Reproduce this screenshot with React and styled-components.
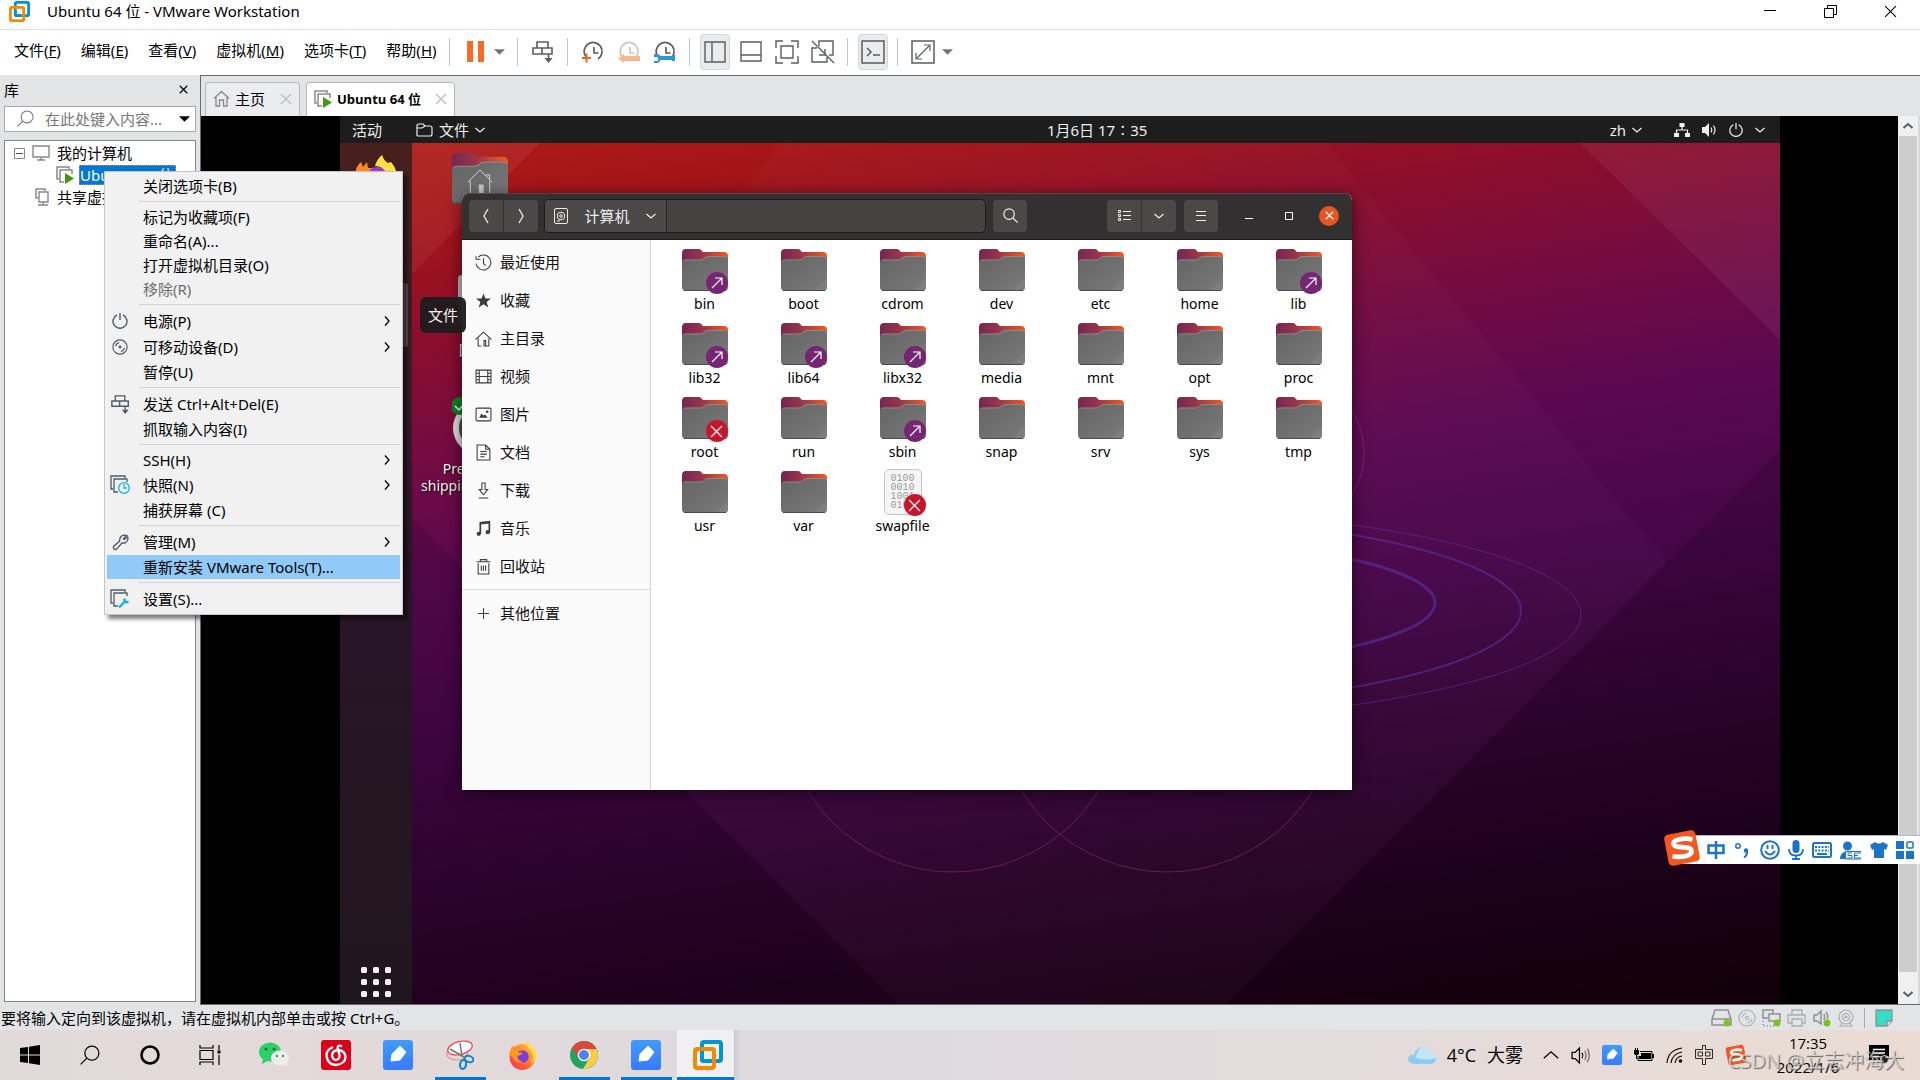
import React from "react";
import styled, { createGlobalStyle, css } from "styled-components";

const GlobalStyle = createGlobalStyle`
  * {
    box-sizing: border-box;
  }

  body {
    margin: 0;
    font-family: "Noto Sans", "Noto Sans CJK SC", sans-serif;
    font-size: 15px;
    line-height: 20px;
    color: #000;
    overflow: hidden;
  }

  button,
  input {
    font: inherit;
    color: inherit;
    border: 0;
    padding: 0;
    background: none;
  }
`;

const Screen = styled.div`
  display: flex;
  flex-direction: column;
  height: 100vh;
  position: relative;
  background: #e3e4e6;
`;

const Glyph = styled.svg`
  display: block;
  flex: none;
  fill: none;
  stroke: ${(p) => (p.$flat ? "none" : "currentColor")};
  stroke-width: ${(p) => p.$stroke || 2};
`;

/* ---------- VMware title bar and toolbar ---------- */

const TitleBar = styled.header`
  display: flex;
  align-items: center;
  height: 30px;
  padding: 0 0 7px 9px;
  background: #fff;
  border-bottom: 1px solid #e0e1e2;
`;

const TitleText = styled.h1`
  flex: 1;
  margin: 0 0 0 17px;
  font-size: 15px;
  font-weight: 400;
`;

const CaptionButton = styled.button`
  display: flex;
  align-items: center;
  justify-content: center;
  width: 60px;
  height: 24px;
`;

const Toolbar = styled.div`
  display: flex;
  align-items: center;
  gap: 6px;
  height: 45px;
  padding-bottom: 2px;
  padding-left: 4px;
  background: #fff;
  color: #5b5d60;
`;

const MenuNav = styled.nav`
  display: flex;
  width: 436px;
  color: #000;
`;

const MenuButton = styled.button`
  padding: 0 10px 3px;
  white-space: nowrap;
`;

const ToolGroup = styled.div`
  display: flex;
`;

const Tool = styled.button`
  display: flex;
  align-items: center;
  justify-content: center;
  width: ${(p) => (p.$narrow ? 18 : 30)}px;
  height: 36px;
  border-radius: 4px;
  ${(p) =>
    p.$active &&
    css`
      background: #e9ebec;
      border: 1px solid #d4d6d8;
    `}
`;

const ToolDivider = styled.span`
  width: 1px;
  height: 28px;
  margin: 0 4px 0 3px;
  background: #c4c5c7;
`;

/* ---------- Library panel ---------- */

const Workspace = styled.div`
  display: flex;
  flex: 1;
  min-height: 0;
`;

const Library = styled.aside`
  display: flex;
  flex-direction: column;
  width: 200px;
  padding: 0 4px 3px;
`;

const LibraryHead = styled.div`
  display: flex;
  align-items: center;
  justify-content: space-between;
  height: 31px;
  padding: 0 8px 2px 0;
`;

const SearchBox = styled.label`
  display: flex;
  align-items: center;
  height: 26px;
  padding: 0 5px 1px 12px;
  background: #fff;
  border: 1px solid #a7a9ac;
  color: #777;

  input {
    flex: 1;
    min-width: 0;
    margin-left: 11px;
    outline: 0;
  }

  input::placeholder {
    color: #777;
    opacity: 1;
  }
`;

const Tree = styled.ul`
  flex: 1;
  margin: 8px 0 0;
  padding: 1px 0 0;
  list-style: none;
  background: #fff;
  border: 1px solid #82868f;
  overflow: hidden;
`;

const TreeRow = styled.li`
  display: flex;
  align-items: center;
  gap: 5px;
  height: 22px;
  padding-left: ${(p) => p.$indent}px;
  color: #888;
  white-space: nowrap;

  span {
    color: #000;
  }
`;

const TreeSelected = styled.strong`
  padding: 0 3px 0 1px;
  font-weight: 400;
  color: #fff;
  background: #0078d7;
  outline: 1px dotted #e8892a;
  outline-offset: -1px;
`;

/* ---------- Tabs and console ---------- */

const Console = styled.main`
  display: flex;
  flex-direction: column;
  flex: 1;
  min-width: 0;
  border-top: 1px solid #696a6d;
  border-left: 1px solid #696a6d;
  border-bottom: 1px solid #696a6d;
`;

const Tabs = styled.div`
  display: flex;
  align-items: flex-end;
  gap: 6px;
  height: 40px;
  padding-left: 4px;
`;

const Tab = styled.div`
  display: flex;
  align-items: center;
  width: ${(p) => (p.$active ? 149 : 95)}px;
  height: 34px;
  padding: 0 7px 2px;
  border: 1px solid #b9babc;
  border-bottom: 0;
  border-radius: 4px 4px 0 0;
  background: ${(p) => (p.$active ? "#fff" : "#ebecee")};
  color: #8a8a8a;

  span {
    flex: 1;
    padding-left: 5px;
    color: #000;
    font-family: "Open Sans", "Noto Sans CJK SC", sans-serif;
    font-size: ${(p) => (p.$active ? 13 : 15)}px;
    font-weight: ${(p) => (p.$active ? 700 : 400)};
    white-space: nowrap;
  }

  button {
    color: #c3c3c3;
  }
`;

const Viewport = styled.div`
  display: flex;
  flex: 1;
  min-height: 0;
  background: #000;
`;

const Guest = styled.div`
  display: flex;
  flex-direction: column;
  flex: 1;
  margin: 0 118px 0 139px;
  color: #f2f2f2;
`;

const ScrollBar = styled.div`
  display: flex;
  flex-direction: column;
  width: 22px;
  background: #f0f0f0;
  border-right: 2px solid #d8d9db;
  color: #606060;
`;

const ScrollThumb = styled.div`
  flex: 1;
  margin: 0 1px 12px;
  background: #cdcdcd;
`;

const ScrollArrow = styled.button`
  display: flex;
  justify-content: center;
  align-items: center;
  height: 20px;
`;

/* ---------- Ubuntu desktop ---------- */

/* the clock sits right of the centre, as the side columns differ */
const TopBar = styled.div`
  display: grid;
  grid-template-columns: 9fr auto 8fr;
  align-items: center;
  height: 27px;
  padding: 0 15px 0 12px;
  background: #1d1d1d;
  color: #eee;
`;

const TopBarSide = styled.div`
  display: flex;
  align-items: center;
  gap: ${(p) => p.$gap}px;
  justify-content: ${(p) => (p.$end ? "flex-end" : "flex-start")};
`;

const TopBarButton = styled.button`
  display: flex;
  align-items: center;
  gap: 6px;
  margin-right: ${(p) => p.$after || 0}px;
`;

const Desktop = styled.div`
  position: relative;
  display: flex;
  flex: 1;
  min-height: 0;
  overflow: hidden;
  background: linear-gradient(
    171deg,
    #b01c16 0%,
    #a31419 9%,
    #8c0e2c 19%,
    #740b42 30%,
    #5a0852 42%,
    #460648 56%,
    #320433 70%,
    #22021f 84%,
    #13000a 100%
  );
`;

const Wallpaper = styled.svg`
  position: absolute;
  inset: 0;
  width: 100%;
  height: 100%;
`;

const Dock = styled.div`
  position: relative;
  display: flex;
  flex-direction: column;
  justify-content: space-between;
  align-items: center;
  width: 72px;
  padding: 11px 0 7px;
  background: linear-gradient(#47201d 0%, #3c1a28 30%, #2a1529 50%, #20161f 100%);
`;

const DockRunning = styled.span`
  position: absolute;
  top: 140px;
  left: 8px;
  width: 60px;
  height: 64px;
  border-radius: 3px;
  background: rgba(255, 255, 255, 0.22);
`;

const DesktopIcon = styled.div`
  position: absolute;
  left: 75px;
  top: ${(p) => p.$y}px;
  display: flex;
  flex-direction: column;
  align-items: center;
  width: 130px;
  gap: ${(p) => p.$gap || 4}px;
  font-size: 14px;
  line-height: 17px;
  text-align: center;
  text-shadow: 1px 1px 1px #000;
`;

const DockTooltip = styled.span`
  position: absolute;
  left: 80px;
  top: 154px;
  padding: 8px;
  border-radius: 6px;
  background: rgba(30, 28, 28, 0.95);
  line-height: 20px;
`;

/* ---------- Files window ---------- */

const FilesFrame = styled.section`
  position: absolute;
  left: 122px;
  top: 50px;
  display: flex;
  width: 890px;
  height: 597px;
  border-radius: 8px 8px 0 0;
  box-shadow: 0 3px 16px rgba(0, 0, 0, 0.6);
`;

const FilesWindow = styled.div`
  display: flex;
  flex-direction: column;
  flex: 1;
  border-radius: 8px 8px 0 0;
  overflow: hidden;
  background: #fff;
  color: #000;
`;

const HeaderBar = styled.div`
  display: flex;
  align-items: center;
  height: 47px;
  padding: 0 13px 2px 7px;
  background: #323030;
  border-top: 1px solid #4a4848;
  border-bottom: 1px solid #1c1b1b;
  color: #eee;
`;

const ButtonPair = styled.div`
  display: flex;
  gap: 1px;
  margin-right: ${(p) => p.$after}px;
  border-radius: 4px;
  overflow: hidden;
`;

const HeaderButton = styled.button`
  display: flex;
  align-items: center;
  justify-content: center;
  width: 34px;
  height: 32px;
  background: #4a4947;
`;

const PathBar = styled.div`
  display: flex;
  flex: 1;
  height: 34px;
  margin-right: 7px;
  border: 1px solid #1d1c1c;
  border-radius: 5px;
  background: #444340;
  overflow: hidden;
`;

const PathSegment = styled.button`
  display: flex;
  align-items: center;
  justify-content: space-between;
  width: 122px;
  padding: 0 10px 0 9px;
  background: #4a4947;
  border-right: 1px solid #242323;
`;

const WindowControls = styled.div`
  display: flex;
  align-items: center;
  gap: 20px;
`;

const WindowControl = styled.button`
  display: flex;
  align-items: center;
  justify-content: center;
  width: 20px;
  height: 20px;
  border-radius: 50%;
  color: #fff;
  background: ${(p) => (p.$close ? "#e95420" : "transparent")};
`;

const FilesBody = styled.div`
  display: flex;
  flex: 1;
`;

const Places = styled.nav`
  width: 189px;
  padding-top: 3px;
  background: #fafafa;
  border-right: 1px solid #d6d6d6;
`;

const Place = styled.a`
  display: flex;
  align-items: center;
  gap: 8px;
  height: 38px;
  padding-left: 13px;
  color: #111;
  text-decoration: none;

  svg {
    color: #3d3d3d;
  }
`;

const PlacesDivider = styled.hr`
  margin: 4px 0;
  border: 0;
  border-top: 1px solid #dcdcdc;
`;

const FileGrid = styled.div`
  display: grid;
  flex: 1;
  grid-template-columns: repeat(7, 1fr);
  grid-auto-rows: 74px;
  align-content: start;
  padding: 9px 4px 0;
`;

const FileCell = styled.figure`
  display: flex;
  flex-direction: column;
  align-items: center;
  gap: 3px;
  margin: 0;

  figcaption {
    font-size: 14px;
    line-height: 18px;
  }
`;

const FileArt = styled.div`
  position: relative;
  width: 46px;
  height: 43px;
`;

const Emblem = styled.span`
  position: absolute;
  right: 0;
  bottom: -2px;
  display: flex;
  align-items: center;
  justify-content: center;
  width: 22px;
  height: 22px;
  border-radius: 50%;
  color: #fff;
  background: ${(p) => (p.$denied ? "#c7162b" : "#762572")};
`;

const BinarySheet = styled.div`
  width: 38px;
  height: 46px;
  margin: -2px auto 0;
  padding-top: 4px;
  border: 1px solid #c4c4c4;
  border-radius: 5px;
  background: #f5f5f5;
  color: #999;
  font-family: "Liberation Mono", monospace;
  font-size: 10px;
  line-height: 9px;
  text-align: center;
`;

/* ---------- Context menu ---------- */

const ContextMenu = styled.div`
  position: absolute;
  left: 104px;
  top: 171px;
  width: 299px;
  padding: 2px;
  border: 1px solid #c6c6c6;
  background: #f1f1f1;
  box-shadow: 4px 4px 4px rgba(0, 0, 0, 0.5);
`;

const ContextItem = styled.button`
  display: grid;
  grid-template-columns: 36px 1fr 18px;
  align-items: center;
  width: 100%;
  height: ${(p) => (p.$tall ? 26 : 24)}px;
  text-align: left;
  color: ${(p) => (p.$disabled ? "#6d6d6d" : "#000")};
  background: ${(p) => (p.$selected ? "#91c9f7" : "transparent")};
`;

const ContextIcon = styled.span`
  display: flex;
  justify-content: center;
  width: 26px;
  color: #4d5c68;
`;

const ContextDivider = styled.hr`
  height: 7px;
  margin: 0 0 0 32px;
  border: 0;
  background: linear-gradient(#d2d2d2, #d2d2d2) 0 3px / 100% 1px no-repeat;
`;

/* ---------- Status bar and taskbar ---------- */

const StatusBar = styled.footer`
  display: flex;
  align-items: center;
  height: 25px;
  padding: 0 27px 0 1px;
  color: #8e9092;
`;

const StatusText = styled.span`
  flex: 1;
  color: #000;
`;

const StatusIcons = styled.div`
  display: flex;
  align-items: center;
  gap: 5px;
`;

const StatusDivider = styled.span`
  width: 1px;
  height: 20px;
  margin: 0 5px 0 3px;
  background: #a8a8a8;
`;

const Taskbar = styled.div`
  display: flex;
  align-items: center;
  height: 50px;
  padding-right: 31px;
  background: linear-gradient(90deg, #e2dad8 0%, #e3d9d9 20%, #dedae0 45%, #e4dbdb 70%, #eadcd3 100%);
`;

const TaskGroup = styled.div`
  display: flex;
  margin-right: 3px;
`;

const TaskButton = styled.button`
  display: flex;
  align-items: center;
  justify-content: center;
  width: ${(p) => (p.$system ? 60 : 62)}px;
  height: 50px;
  background-repeat: no-repeat;
  background-position: center bottom;
  ${(p) =>
    p.$running &&
    css`
      background-image: linear-gradient(#0078d7, #0078d7);
      background-size: 51px 3px;
    `}
  ${(p) =>
    p.$active &&
    css`
      background-color: #f2eff2;
      background-image: linear-gradient(#0078d7, #0078d7);
      background-size: 100% 3px;
      box-shadow: inset -4px 0 rgba(225, 222, 230, 0.6), inset -5px 0 #c4c2c8;
    `}
`;

const Tray = styled.div`
  display: flex;
  align-items: center;
  gap: 12px;
  margin-left: auto;
`;

const Weather = styled.div`
  display: flex;
  align-items: center;
  gap: 11px;
  margin-right: 8px;
  font-family: "Open Sans", "Noto Sans CJK SC", sans-serif;
  font-size: 18px;
`;

const Clock = styled.time`
  width: 98px;
  text-align: center;
  font-family: "Open Sans", sans-serif;
  line-height: 24px;
`;

const Watermark = styled.span`
  position: absolute;
  right: 16px;
  bottom: 6px;
  color: rgba(225, 225, 225, 0.75);
  font-family: "Open Sans", "Noto Sans CJK SC", sans-serif;
  font-size: 20px;
  line-height: 26px;
  text-shadow: 1px 1px 1px rgba(70, 70, 70, 0.8);
`;

const ImeBar = styled.div`
  position: absolute;
  right: 0;
  top: 835px;
  display: flex;
  align-items: center;
  justify-content: space-between;
  width: 245px;
  height: 29px;
  padding: 0 6px 0 32px;
  background: #fff;
  border-top: 1px solid #b8b6c4;
  color: #1c74c8;
`;

const ImeLogo = styled.span`
  position: absolute;
  left: -12px;
  top: -7px;
`;

/* ---------- Drawings ---------- */

const VmwareLogo = ({ size }) => (
  <Glyph width={size} height={size} viewBox="0 0 30 30" $stroke={4}>
    <rect x="9" y="2" width="19" height="19" rx="2" stroke="#0095d5" />
    <rect x="2" y="9" width="19" height="19" rx="2" stroke="#f38b00" />
    <path d="M9 13V19Q9 21 11 21H17" stroke="#0095d5" />
  </Glyph>
);

const Chevron = ({ width = 10, dir = "down", stroke = 1.3 }) => {
  const turn = { down: 0, up: 180, left: 90, right: -90 }[dir];
  return (
    <Glyph width={width} height={width} viewBox="0 0 10 10" $stroke={stroke}>
      <path d="M0.5 3 5 7 9.5 3" transform={`rotate(${turn} 5 5)`} />
    </Glyph>
  );
};

const Cross = ({ size = 12, stroke = 1.5 }) => (
  <Glyph width={size} height={size} viewBox="0 0 12 12" $stroke={stroke}>
    <path d="M1 1 11 11M11 1 1 11" />
  </Glyph>
);

const Triangle = ({ color = "#757575" }) => (
  <Glyph width="11" height="6" viewBox="0 0 12 6" $flat>
    <path d="M0 0H12L6 6Z" fill={color} />
  </Glyph>
);

const Magnifier = ({ size = 16, flip, stroke = 1.3 }) => (
  <Glyph width={size} height={size} viewBox="0 0 16 16" $stroke={stroke}>
    <g transform={flip ? "translate(16 0) scale(-1 1)" : undefined}>
      <circle cx="6.5" cy="6.5" r="5.6" />
      <path d="M10.5 10.5 15.5 15.5" />
    </g>
  </Glyph>
);

const SendKeys = ({ size = 22, stroke = 1.6 }) => (
  <Glyph width={size} height={size} viewBox="0 0 22 22" $stroke={stroke}>
    <path d="M5 1H16V7H5ZM1 7H10V13H1ZM10 7H20V13H10ZM16.5 13V19" />
    <path d="M12.5 17H20.5L16.5 22Z" fill="currentColor" stroke="none" />
  </Glyph>
);

const SnapshotClock = ({ children, faded }) => (
  <Glyph width="22" height="22" viewBox="0 0 22 22">
    <g opacity={faded ? 0.35 : 1}>
      <path d="M4 16A9 9 0 1 1 16 18M12 6V12H16.5" strokeWidth="1.7" />
    </g>
    {children}
  </Glyph>
);

const WrenchMark = () => (
  <path d="M0 13H4L7 15H18V14H21V20H18V19H7L4 22H0V20H4V16H0Z" fill="#2896dc" stroke="none" />
);

const GuestMark = ({ size = 18 }) => (
  <Glyph width={size} height={size} viewBox="0 0 18 18" $stroke={1.5}>
    <path d="M3 13H1V1H13V3M8 16H4V4H16V8" />
    <path d="M9 7 18 12.5 9 18Z" fill="#3f9a0c" stroke="none" />
  </Glyph>
);

const HomeMark = ({ size = 17 }) => (
  <Glyph width={size} height={size} viewBox="0 0 17 17" $stroke={1.3}>
    <path d="M1 8.5 8.5 1.5 16 8.5M3 7V16H6.5V10H10.5V16H14V7" />
  </Glyph>
);

const PowerMark = ({ size = 16 }) => (
  <Glyph width={size} height={size} viewBox="0 0 16 16" $stroke={1.4}>
    <path d="M5 2A7 7 0 1 0 11 2M8 0V7" />
  </Glyph>
);

const DiscMark = ({ size = 18 }) => (
  <Glyph width={size} height={size} viewBox="0 0 18 18" $stroke={1.3}>
    <circle cx="9" cy="9" r="8" />
    <circle cx="9" cy="9" r="1" fill="currentColor" />
    <path d="M4 8Q5 4.5 8 4M14 10Q13 13.5 10 14" />
  </Glyph>
);

const Wrench = () => (
  <Glyph width="17" height="17" viewBox="0 0 18 18" $stroke={1.4}>
    <path d="M15.5 1.5 12 5 13 6 16.5 3Q18 7 14 9.5H10.5L5 16Q2.5 17.5 1.5 14.5Q1 13 3 12L8 7.5Q8 2 12.5 1.2Z" />
  </Glyph>
);

const CopyMark = ({ accent }) => (
  <Glyph width="20" height="20" viewBox="0 0 20 20" $stroke={1.3}>
    <path d="M3 14H1V1H15V3M8 17H4V4H17V7" />
    {accent === "clock" ? (
      <g stroke="#12b4d8">
        <circle cx="14" cy="13" r="5.3" fill="#f1f1f1" />
        <path d="M14 9V13H17" />
      </g>
    ) : (
      <path d="M9 18.5 15 12.5M14.5 9.5V13H18.5" stroke="#12b4d8" strokeWidth="2.4" />
    )}
  </Glyph>
);

const Folder = ({ width = 46, height = 42, home }) => (
  <Glyph width={width} height={height} viewBox="0 0 46 42" $flat>
    <path d="M0 14V4Q0 0 4 0H17Q19 0 20 2L21 3H42Q46 3 46 7V16Z" fill="url(#folderBack)" />
    <path
      d="M0 15Q0 10.5 4 10.5H18Q21 10.5 22 9Q24 7 26 7H42Q46 7 46 11V38Q46 42 42 42H4Q0 42 0 38Z"
      fill="url(#folderFront)"
    />
    <path
      d="M1 12Q2 11 4 11H18Q21 11 22 9.5Q24 7.5 26 7.5H42Q44.5 7.5 45.5 9"
      stroke="#969696"
      strokeWidth="0.7"
    />
    <path d="M46 29V38Q46 42 42 42H33Z" fill="#838383" opacity=".6" />
    <path d="M2 41.5H44" stroke="#4c4c4c" strokeWidth="1" />
    {home && (
      <g>
        <path
          d="M13 24 23 14 33 24M15 23V38M31 23V38M28 18H31V22"
          stroke="#d6d6d6"
          strokeWidth="0.8"
        />
        <rect x="22" y="26" width="4" height="10" fill="#ccc" />
      </g>
    )}
  </Glyph>
);

const SogouMark = ({ size }) => (
  <Glyph width={size} height={size} viewBox="0 0 36 36" $flat>
    <rect x="3" y="3" width="30" height="30" rx="4" fill="#f4571f" transform="rotate(-11 18 18)" />
    <path
      d="M28 10C20 8 9 10 10 14.5C11 19 26 15 27 20.5C28 26 16 27 9 26"
      stroke="#fff"
      strokeWidth="4.5"
    />
  </Glyph>
);

const PenApp = ({ size }) => (
  <Glyph width={size} height={size} viewBox="0 0 30 30" $flat>
    <rect width="30" height="30" rx="3" fill="url(#penBlue)" />
    <path
      d="M8 21 9 14 17 6 23 12 17 20Z"
      fill="#fff"
      stroke="#fff"
      strokeWidth="1"
      strokeLinejoin="round"
    />
  </Glyph>
);

const FirefoxLogo = ({ size }) => (
  <Glyph width={size} height={size} viewBox="0 0 28 28" $flat>
    <circle cx="14" cy="15.5" r="12.5" fill="url(#foxFire)" />
    <path d="M18 0Q17 5 21 8Q27 14 22 22Q30 16 26 8L24 6Q23 8 22 6Q21 2 18 0Z" fill="#ffdf3a" />
    <circle cx="14" cy="15" r="6" fill="#7a3fd8" />
    <path
      d="M1 13Q2 7 5 4L6 8Q9 6 12 7L9 11H14Q13 14 9 14Q9 20 15 20Q10 22 6 18Q4 14 1 13Z"
      fill="#ff9a1f"
    />
  </Glyph>
);

/* only the top of this one shows over the context menu */
const DockFirefox = () => (
  <Glyph width="46" height="46" viewBox="0 0 46 46" $flat>
    <path d="M2 20Q3 12 8 8L10 13L14 8L15 14H34L28 40H12Z" fill="#ff8a1f" />
    <path d="M22 12Q24 5 29 1Q31 7 35 9L38 8Q45 16 44 26Q42 40 32 43L34 20Q30 12 22 12Z" fill="#ffe040" />
    <path d="M16 18Q18 13 24 13Q31 13 32 18L28 30Z" fill="#9a3be0" />
  </Glyph>
);

const ChromeLogo = () => (
  <Glyph width="28" height="28" viewBox="0 0 28 28" $flat>
    <circle cx="14" cy="14" r="14" fill="#21a45c" />
    <path d="M14 8H26.5A14 14 0 0 1 13 28L19.5 17Z" fill="#ffcd41" />
    <path d="M2 7A14 14 0 0 1 26.5 8H14L8 17Z" fill="#d8493c" />
    <circle cx="14" cy="14" r="6.3" fill="#fff" />
    <circle cx="14" cy="14" r="5" fill="#4a86ee" />
  </Glyph>
);

const WechatLogo = () => (
  <Glyph width="30" height="26" viewBox="0 0 30 26" $flat>
    <ellipse cx="11" cy="10" rx="11" ry="9.5" fill="#2fcf6c" />
    <path d="M4 16 3 22 10 18Z" fill="#2fcf6c" />
    <circle cx="7" cy="7" r="1.5" fill="#116a35" />
    <circle cx="15" cy="7" r="1.5" fill="#116a35" />
    <ellipse cx="21" cy="16" rx="9" ry="7.5" fill="#ededed" />
    <path d="M24 21 28 25 28 19Z" fill="#ededed" />
    <circle cx="18" cy="14" r="1.2" fill="#777" />
    <circle cx="24" cy="14" r="1.2" fill="#777" />
  </Glyph>
);

const NeteaseLogo = () => (
  <Glyph width="30" height="30" viewBox="0 0 30 30" $stroke={2.3}>
    <rect width="30" height="30" rx="3" fill="#dd001b" stroke="none" />
    <path
      d="M12 7Q5 10 5.5 16Q7 25 15 25Q24 24 24.5 17Q24 11 18 10Q11 10 11 16Q12 20 15 20Q19 19 18.5 15L16.5 8Q17 4 21 6.5"
      stroke="#fff"
    />
  </Glyph>
);

const SnipLogo = () => (
  <Glyph width="28" height="30" viewBox="0 0 28 30" $stroke={1.2}>
    <ellipse cx="11" cy="14" rx="10.5" ry="6" stroke="#e89292" />
    <ellipse
      cx="14"
      cy="8"
      rx="12.5"
      ry="6.5"
      transform="rotate(-14 14 8)"
      fill="#fafafa"
      stroke="#ea3d3d"
    />
    <path d="M4 9 18 17M14 3 16 17" stroke="#777" strokeWidth="1.5" />
    <g stroke="#1384cf" strokeWidth="2">
      <ellipse cx="23" cy="19" rx="4.5" ry="3" transform="rotate(20 23 19)" />
      <ellipse cx="17" cy="24.5" rx="3" ry="4.5" transform="rotate(10 17 25)" />
    </g>
  </Glyph>
);

const SpeakerMark = ({ size = 18 }) => (
  <Glyph width={size} height={size} viewBox="0 0 18 18" $stroke={1.2}>
    <path d="M1 6H4L8 2V16L4 12H1ZM10.5 6.5Q12 9 10.5 11.5" />
    <path d="M13 4.5Q15.5 9 13 13.5M15.5 2.5Q19 9 15.5 15.5" opacity=".5" />
  </Glyph>
);

/* ---------- Data ---------- */

const menus = [
  ["文件", "F"],
  ["编辑", "E"],
  ["查看", "V"],
  ["虚拟机", "M"],
  ["选项卡", "T"],
  ["帮助", "H"],
];

const contextItems = [
  { text: "关闭选项卡(B)" },
  null,
  { text: "标记为收藏项(F)" },
  { text: "重命名(A)..." },
  { text: "打开虚拟机目录(O)" },
  { text: "移除(R)", disabled: true },
  null,
  { text: "电源(P)", icon: <PowerMark size={16} />, more: true },
  { text: "可移动设备(D)", icon: <DiscMark size={16} />, more: true },
  { text: "暂停(U)" },
  null,
  { text: "发送 Ctrl+Alt+Del(E)", icon: <SendKeys size={19} /> },
  { text: "抓取输入内容(I)" },
  null,
  { text: "SSH(H)", more: true },
  { text: "快照(N)", icon: <CopyMark accent="clock" />, more: true },
  { text: "捕获屏幕 (C)" },
  null,
  { text: "管理(M)", icon: <Wrench />, more: true },
  { text: "重新安装 VMware Tools(T)...", selected: true },
  null,
  { text: "设置(S)...", icon: <CopyMark accent="wrench" /> },
];

const places = [
  ["最近使用", <path d="M3 3A7 7 0 1 1 1 9M1 2V5H5M8 4V9L10 11" />],
  [
    "收藏",
    <path
      d="M8 1.5 9.8 6H15L11 9.3 12.5 14.5 8 11.5 3.5 14.5 5 9.3 1 6H6.2Z"
      fill="currentColor"
      stroke="none"
    />,
  ],
  ["主目录", <path d="M0.5 9 8 2 15.5 9M3 8V15H6M10 15H13V8M8.5 15V10H10V15Z" />],
  [
    "视频",
    <path d="M1 2H15V14H1ZM4 2V14M12 2V14M4 8H12M1 5H4M1 8H4M1 11H4M12 5H15M12 8H15M12 11H15" />,
  ],
  [
    "图片",
    <g>
      <rect x="1" y="2" width="14" height="12" rx="1" />
      <path d="M4 11 6 7 8 9 9.5 8 12 11Z" fill="currentColor" stroke="none" />
      <circle cx="11.5" cy="5.5" r="1.2" fill="currentColor" stroke="none" />
    </g>,
  ],
  ["文档", <path d="M2 1H10L14 5V15H2ZM10 1V5H14M5 7H11M5 9.5H11M5 12H9" />],
  ["下载", <path d="M6.5 1H9.5V7H12L8 12 4 7H6.5ZM3.5 15H12.5" />],
  [
    "音乐",
    <g>
      <path d="M5 13V2.5L13.5 1.5V11.5M5 3.5 13.5 2.5" strokeWidth="1.6" />
      <circle cx="3.5" cy="13" r="2" fill="currentColor" stroke="none" />
      <circle cx="12" cy="11.5" r="2" fill="currentColor" stroke="none" />
    </g>,
  ],
  ["回收站", <path d="M1.5 3.5H14.5M5 3V1.5H11V3M3 5V15H13V5M6 7V12M8 7V12M10 7V12" />],
];

const files = [
  ["bin", "link"],
  ["boot"],
  ["cdrom"],
  ["dev"],
  ["etc"],
  ["home"],
  ["lib", "link"],
  ["lib32", "link"],
  ["lib64", "link"],
  ["libx32", "link"],
  ["media"],
  ["mnt"],
  ["opt"],
  ["proc"],
  ["root", "denied"],
  ["run"],
  ["sbin", "link"],
  ["snap"],
  ["srv"],
  ["sys"],
  ["tmp"],
  ["usr"],
  ["var"],
  ["swapfile", "denied"],
];

/* ---------- Sections ---------- */

function VmToolbar() {
  return (
    <Toolbar>
      <MenuNav>
        {menus.map(([text, key]) => (
          <MenuButton key={key}>
            {text}(<u>{key}</u>)
          </MenuButton>
        ))}
      </MenuNav>
      <ToolDivider />
      <ToolGroup>
        <Tool aria-label="挂起">
          <Glyph width="17" height="21" viewBox="0 0 17 21" $flat>
            <path d="M0 0H6V21H0ZM11 0H17V21H11Z" fill="#fb6a22" />
          </Glyph>
        </Tool>
        <Tool $narrow aria-label="电源选项">
          <Triangle />
        </Tool>
      </ToolGroup>
      <ToolDivider />
      <Tool aria-label="发送">
        <SendKeys />
      </Tool>
      <ToolDivider />
      <Tool aria-label="拍摄快照">
        <SnapshotClock>
          <path d="M0 17H9M4.5 12.5V21.5" stroke="#ec6426" />
        </SnapshotClock>
      </Tool>
      <Tool aria-label="恢复快照">
        <SnapshotClock faded>
          <path d="M22 15V20H6V22L0 17.5 6 13V15Z" fill="#fdb48f" stroke="none" />
        </SnapshotClock>
      </Tool>
      <Tool aria-label="管理快照">
        <SnapshotClock>
          <WrenchMark />
        </SnapshotClock>
      </Tool>
      <ToolDivider />
      <Tool $active aria-label="显示库">
        <Glyph width="22" height="22" viewBox="0 0 22 22" $stroke={1.4}>
          <path d="M1 1H21V21H1ZM8 1V21" />
        </Glyph>
      </Tool>
      <Tool aria-label="缩略图栏">
        <Glyph width="22" height="22" viewBox="0 0 22 22" $stroke={1.4}>
          <path d="M1 1H21V20H1ZM1 14H21" />
        </Glyph>
      </Tool>
      <Tool aria-label="全屏">
        <Glyph width="24" height="24" viewBox="0 0 24 24" $stroke={1.4}>
          <path d="M1 8V1H8M16 1H23V8M23 16V23H16M8 23H1V16M6 6H18V18H6Z" />
        </Glyph>
      </Tool>
      <Tool aria-label="Unity">
        <Glyph width="24" height="24" viewBox="0 0 24 24" $stroke={1.4}>
          <path d="M8 6V1H22V15H18M6 8H1V22H16V17M8 15H14V9M1 1 23 23" />
        </Glyph>
      </Tool>
      <ToolDivider />
      <Tool $active aria-label="控制台视图">
        <Glyph width="24" height="24" viewBox="0 0 24 24" $stroke={1.5}>
          <path d="M1 1H23V23H1ZM6 8 10 12 6 16M12 15H19" />
        </Glyph>
      </Tool>
      <ToolDivider />
      <ToolGroup>
        <Tool aria-label="拉伸">
          <Glyph width="24" height="24" viewBox="0 0 24 24" $stroke={1.5}>
            <path d="M1 1H23V23H1Z" />
            <path d="M5 13V19H11M13 5H19V11M6 18 18 6" strokeWidth="1.2" />
          </Glyph>
        </Tool>
        <Tool $narrow aria-label="拉伸选项">
          <Triangle />
        </Tool>
      </ToolGroup>
    </Toolbar>
  );
}

function LibraryPanel() {
  return (
    <Library>
      <LibraryHead>
        <span>库</span>
        <button aria-label="关闭库">
          <Cross size={9} />
        </button>
      </LibraryHead>
      <SearchBox>
        <Magnifier flip size={17} stroke={1} />
        <input aria-label="搜索" placeholder="在此处键入内容..." />
        <Triangle color="#000" />
      </SearchBox>
      <Tree>
        <TreeRow $indent={9}>
          <Glyph width="11" height="11" viewBox="0 0 11 11" $stroke={1}>
            <path d="M0.5 0.5H10.5V10.5H0.5Z" />
            <path d="M2 5.5H9" stroke="#2c4a9e" />
          </Glyph>
          <Glyph width="22" height="16" viewBox="0 0 22 16" $stroke={1.4}>
            <path d="M3 1H19V12H3ZM7 15H15M11 12V15" />
          </Glyph>
          <span>我的计算机</span>
        </TreeRow>
        <TreeRow $indent={51}>
          <GuestMark />
          <TreeSelected>Ubuntu 64 位</TreeSelected>
        </TreeRow>
        <TreeRow $indent={29}>
          <Glyph width="18" height="18" viewBox="0 0 18 18" $stroke={1.4}>
            <path d="M4 10H2V1H11V3M5 4H14V14H5ZM9 14V17M4 17H14" />
          </Glyph>
          <span>共享虚拟机</span>
        </TreeRow>
      </Tree>
    </Library>
  );
}

function VmContextMenu() {
  return (
    <ContextMenu role="menu">
      {contextItems.map((item, i) =>
        item ? (
          <ContextItem
            key={i}
            role="menuitem"
            $tall={Boolean(item.icon)}
            $disabled={item.disabled}
            $selected={item.selected}
          >
            <ContextIcon>{item.icon}</ContextIcon>
            <span>{item.text}</span>
            {item.more && <Chevron dir="right" width={10} />}
          </ContextItem>
        ) : (
          <ContextDivider key={i} />
        )
      )}
    </ContextMenu>
  );
}

function GnomeTopBar() {
  return (
    <TopBar>
      <TopBarSide $gap={34}>
        <TopBarButton>活动</TopBarButton>
        <TopBarButton>
          <Glyph width="17" height="14" viewBox="0 0 17 14" $stroke={1.2}>
            <path d="M1 13V3Q1 1 3 1H7L9 3H14Q16 3 16 5V11Q16 13 14 13H1M1 5H6L9 3" />
          </Glyph>
          文件
          <Chevron />
        </TopBarButton>
      </TopBarSide>
      <span>1月6日 17∶35</span>
      <TopBarSide $end $gap={12}>
        <TopBarButton $after={20}>
          zh
          <Chevron />
        </TopBarButton>
        <Glyph width="16" height="14" viewBox="0 0 16 14" $stroke={1.2}>
          <path
            d="M5.5 0H10.5V4H5.5ZM0 10H5V14H0ZM11 10H16V14H11Z"
            fill="currentColor"
            stroke="none"
          />
          <path d="M8 4V7M2.5 10V7H13.5V10" />
        </Glyph>
        <Glyph width="15" height="14" viewBox="0 0 15 14" $stroke={1.2}>
          <path d="M0 4H3L7 0V14L3 10H0Z" fill="currentColor" stroke="none" />
          <path d="M9 4.5Q10.5 7 9 9.5M11.5 2.5Q14.5 7 11.5 11.5" />
        </Glyph>
        <PowerMark size={14} />
        <Chevron />
      </TopBarSide>
    </TopBar>
  );
}

function DesktopBackground() {
  return (
    <Wallpaper viewBox="0 0 1440 861" preserveAspectRatio="none">
      <defs>
        <linearGradient id="folderBack" x1="0" x2="1">
          <stop offset="0" stopColor="#752653" />
          <stop offset="0.4" stopColor="#96344a" />
          <stop offset="1" stopColor="#f05a22" />
        </linearGradient>
        <linearGradient id="folderFront" x1="0" y1="0" x2="1" y2="1">
          <stop offset="0" stopColor="#646464" />
          <stop offset="1" stopColor="#7a7a7a" />
        </linearGradient>
        <linearGradient id="penBlue" x1="0" y1="0" x2="0" y2="1">
          <stop offset="0" stopColor="#3f9bff" />
          <stop offset="1" stopColor="#377bff" />
        </linearGradient>
        <linearGradient id="foxFire" x1="1" y1="0" x2="0" y2="1">
          <stop offset="0" stopColor="#ffd43a" />
          <stop offset="0.5" stopColor="#ff7a2c" />
          <stop offset="1" stopColor="#f5235f" />
        </linearGradient>
      </defs>
      <path d="M0 0H200L0 205Z" fill="#fff" opacity=".06" />
      <path d="M440 0H986L1327 419 887 861H558L118 421Z" fill="#fff" opacity=".02" />
      <path d="M1240 0H1440V197Z" fill="#fff" opacity=".05" />
      <path d="M1327 419 887 861H1440V306Z" fill="#000" opacity=".12" />
      <path d="M0 303 558 861H0Z" fill="#000" opacity=".12" />
      <g fill="none" stroke="#a04070" opacity=".45">
        <circle cx="613" cy="558" r="171" />
        <circle cx="827" cy="558" r="171" />
        <circle cx="944" cy="310" r="80" />
      </g>
      <g fill="none" stroke="#5c3bb0" opacity=".5">
        <ellipse cx="730" cy="472" rx="511" ry="108" />
        <ellipse cx="730" cy="468" rx="451" ry="98" strokeWidth="2" />
        <ellipse cx="730" cy="460" rx="365" ry="69" strokeWidth="3" />
      </g>
    </Wallpaper>
  );
}

function FileManager() {
  return (
    <FilesFrame>
      <FilesWindow>
        <HeaderBar>
          <ButtonPair $after={6}>
            <HeaderButton aria-label="后退">
              <Glyph width="8" height="16" viewBox="0 0 8 16" $stroke={1.3}>
                <path d="M6 1 2 8 6 15" />
              </Glyph>
            </HeaderButton>
            <HeaderButton aria-label="前进">
              <Glyph width="8" height="16" viewBox="0 0 8 16" $stroke={1.3}>
                <path d="M2 1 6 8 2 15" />
              </Glyph>
            </HeaderButton>
          </ButtonPair>
          <PathBar>
            <PathSegment>
              <Glyph width="14" height="16" viewBox="0 0 14 16" $stroke={1}>
                <rect x="0.5" y="0.5" width="13" height="15" rx="1.5" />
                <circle cx="7" cy="8" r="3.8" />
                <circle cx="7" cy="8" r="1.3" />
                <path d="M3 13H6" />
              </Glyph>
              计算机
              <Chevron />
            </PathSegment>
          </PathBar>
          <ButtonPair $after={80}>
            <HeaderButton aria-label="搜索">
              <Magnifier size={15} />
            </HeaderButton>
          </ButtonPair>
          <ButtonPair $after={8}>
            <HeaderButton aria-label="列表视图">
              <Glyph width="13" height="12" viewBox="0 0 13 12" $stroke={1}>
                <path d="M0.5 0.5H2.5V2.5H0.5ZM0.5 4.5H2.5V6.5H0.5ZM0.5 8.5H2.5V10.5H0.5ZM5 1.5H13M5 5.5H13M5 9.5H13" />
              </Glyph>
            </HeaderButton>
            <HeaderButton aria-label="视图选项">
              <Chevron />
            </HeaderButton>
          </ButtonPair>
          <ButtonPair $after={21}>
            <HeaderButton aria-label="菜单">
              <Glyph width="10" height="10" viewBox="0 0 10 10" $stroke={1}>
                <path d="M0 0.5H10M0 4.5H10M0 9.5H10" />
              </Glyph>
            </HeaderButton>
          </ButtonPair>
          <WindowControls>
            <WindowControl aria-label="最小化">
              <Glyph width="8" height="8" viewBox="0 0 8 8" $stroke={1}>
                <path d="M0 6.5H8" />
              </Glyph>
            </WindowControl>
            <WindowControl aria-label="最大化">
              <Glyph width="8" height="8" viewBox="0 0 8 8" $stroke={1}>
                <path d="M0.5 0.5H7.5V7.5H0.5Z" />
              </Glyph>
            </WindowControl>
            <WindowControl $close aria-label="关闭">
              <Cross size={9} />
            </WindowControl>
          </WindowControls>
        </HeaderBar>
        <FilesBody>
          <Places>
            {places.map(([name, shape]) => (
              <Place href="#" key={name}>
                <Glyph width="17" height="17" viewBox="0 0 16 16" $stroke={1}>
                  {shape}
                </Glyph>
                {name}
              </Place>
            ))}
            <PlacesDivider />
            <Place href="#">
              <Glyph width="17" height="17" viewBox="0 0 17 17" $stroke={1}>
                <path d="M3 8.5H14M8.5 3V14" />
              </Glyph>
              其他位置
            </Place>
          </Places>
          <FileGrid>
            {files.map(([name, emblem]) => (
              <FileCell key={name}>
                <FileArt>
                  {name === "swapfile" ? (
                    <BinarySheet>
                      0100
                      <br />
                      0010
                      <br />
                      1001
                      <br />
                      0100
                    </BinarySheet>
                  ) : (
                    <Folder />
                  )}
                  {emblem && (
                    <Emblem $denied={emblem === "denied"}>
                      {emblem === "denied" ? (
                        <Cross size={13} stroke={1.2} />
                      ) : (
                        <Glyph width="12" height="12" viewBox="0 0 12 12" $stroke={1.2}>
                          <path d="M1 11 10.5 1.5M4 1H11V8" />
                        </Glyph>
                      )}
                    </Emblem>
                  )}
                </FileArt>
                <figcaption>{name}</figcaption>
              </FileCell>
            ))}
          </FileGrid>
        </FilesBody>
      </FilesWindow>
    </FilesFrame>
  );
}

function UbuntuDesktop() {
  return (
    <Guest>
      <GnomeTopBar />
      <Desktop>
        <DesktopBackground />
        <Dock>
          <DockFirefox />
          <DockRunning />
          <Glyph width="30" height="30" viewBox="0 0 30 30" $flat>
            {[0, 12, 24].map((y) =>
              [0, 12, 24].map((x) => (
                <rect
                  key={`${x}-${y}`}
                  x={x}
                  y={y}
                  width="6"
                  height="6"
                  rx="1.5"
                  fill="#f2f2f2"
                />
              ))
            )}
          </Glyph>
        </Dock>
        <DesktopIcon $y={10}>
          <Folder width={56} height={51} home />
        </DesktopIcon>
        <DesktopIcon $y={132} $gap={16}>
          <Glyph width="44" height="50" viewBox="0 0 44 50" $flat>
            <rect width="44" height="50" rx="4" fill="#bcbcbc" />
          </Glyph>
          回收站
        </DesktopIcon>
        <DesktopIcon $y={254} $gap={5}>
          <Glyph width="56" height="58" viewBox="0 0 56 58" $flat>
            <circle cx="28" cy="31" r="27" fill="#dedede" />
            <circle cx="28" cy="31" r="21" fill="#4a4a4a" />
            <circle cx="8" cy="9" r="9" fill="#0e8420" />
            <path d="M3 9 7 13 12 7" stroke="#fff" strokeWidth="1.5" />
          </Glyph>
          <span>
            Prepare for
            <br />
            shipping to end ...
          </span>
        </DesktopIcon>
        <FileManager />
        <DockTooltip>文件</DockTooltip>
      </Desktop>
    </Guest>
  );
}

function VmStatusBar() {
  return (
    <StatusBar>
      <StatusText>要将输入定向到该虚拟机，请在虚拟机内部单击或按 Ctrl+G。</StatusText>
      <StatusIcons>
        <Glyph width="22" height="18" viewBox="0 0 22 18" $stroke={1.5}>
          <path d="M4 1H17L20 10V16H1V10ZM1 10H20" />
          <circle cx="16" cy="14" r="3.5" fill="#7ac51c" stroke="none" />
        </Glyph>
        <Glyph width="19" height="18" viewBox="0 0 19 18" $stroke={1.2} opacity=".6">
          <circle cx="9" cy="9" r="8" />
          <circle cx="9" cy="9" r="1.5" />
          <path d="M4 8Q5 5 8 4M14 10Q13 13 10 14" />
        </Glyph>
        <Glyph width="20" height="18" viewBox="0 0 20 18" $stroke={1.5}>
          <path d="M6 9H1V1H11V5M7 5H18V12H7Z" />
          <path d="M1 12V17H14" strokeDasharray="1 2" />
          <circle cx="15" cy="14" r="3.5" fill="#7ac51c" stroke="none" />
        </Glyph>
        <Glyph width="20" height="18" viewBox="0 0 20 18" $stroke={1.3} opacity=".65">
          <path d="M5 6V1H15V6M5 14H1V6H18V14H15M5 10H15V17H5Z" />
        </Glyph>
        <Glyph width="20" height="18" viewBox="0 0 20 18" $stroke={1.5}>
          <path d="M2 6H5L9 2V15L5 12H2ZM12 5Q13 8 12 11M14 3Q17 7 15 10" />
          <circle cx="15" cy="14" r="3.5" fill="#7ac51c" stroke="none" />
        </Glyph>
        <Glyph width="19" height="18" viewBox="0 0 19 18" $stroke={1.2} opacity=".65">
          <circle cx="9" cy="8" r="7" />
          <circle cx="9" cy="8" r="3.5" />
          <circle cx="9" cy="8" r="1" />
          <path d="M5 14 3 17H15L13 14" />
        </Glyph>
        <StatusDivider />
        <Glyph width="18" height="18" viewBox="0 0 18 18" $stroke={1.3}>
          <path d="M1 1H17V12L12 17H1Z" fill="#34dfc8" />
          <path d="M12 17V12H17" fill="#e3e4e6" />
        </Glyph>
      </StatusIcons>
    </StatusBar>
  );
}

function WindowsTaskbar() {
  return (
    <Taskbar>
      <TaskGroup>
        <TaskButton $system aria-label="开始">
          <Glyph width="20" height="20" viewBox="0 0 20 20" $flat>
            <path
              d="M0 3 8 2V9.5H0ZM9 1.8 20 0V9.5H9ZM0 10.5H8V18L0 17ZM9 10.5H20V20L9 18.2Z"
              fill="#000"
            />
          </Glyph>
        </TaskButton>
        <TaskButton $system aria-label="搜索">
          <Magnifier flip size={20} stroke={1} />
        </TaskButton>
        <TaskButton $system aria-label="Cortana">
          <Glyph width="20" height="20" viewBox="0 0 20 20" $stroke={2.6}>
            <circle cx="10" cy="10" r="8.5" />
          </Glyph>
        </TaskButton>
        <TaskButton $system aria-label="任务视图">
          <Glyph width="22" height="20" viewBox="0 0 22 20" $stroke={1.2}>
            <path d="M1 0V3H14V0M1 20V17H14V20M1 5.5H14V14.5H1ZM20 0V5M20 10V20" />
            <path d="M18.5 5.5H21.5V8.5H18.5Z" fill="#000" stroke="none" />
          </Glyph>
        </TaskButton>
      </TaskGroup>
      <TaskButton aria-label="微信">
        <WechatLogo />
      </TaskButton>
      <TaskButton aria-label="网易云音乐">
        <NeteaseLogo />
      </TaskButton>
      <TaskButton aria-label="笔记">
        <PenApp size={30} />
      </TaskButton>
      <TaskButton $running aria-label="截图工具">
        <SnipLogo />
      </TaskButton>
      <TaskButton aria-label="Firefox">
        <FirefoxLogo size={29} />
      </TaskButton>
      <TaskButton $running aria-label="Chrome">
        <ChromeLogo />
      </TaskButton>
      <TaskButton $running aria-label="编辑器">
        <PenApp size={30} />
      </TaskButton>
      <TaskButton $active aria-label="VMware Workstation">
        <VmwareLogo size={30} />
      </TaskButton>
      <Tray>
        <Weather>
          <Glyph width="28" height="18" viewBox="0 0 28 18" $flat>
            <path d="M6 18Q0 17 0 13Q1 8 6 9Q8 1 15 1Q21 2 22 7Q28 8 28 13Q27 18 22 18Z" fill="#8ecbf0" />
            <path d="M8 12Q9 2 15 1Q21 2 22 7Q28 8 28 12Q18 15 8 12Z" fill="#c0e6fa" />
          </Glyph>
          <span>4°C</span>
          <span>大雾</span>
        </Weather>
        <Chevron dir="up" width={16} stroke={0.8} />
        <SpeakerMark size={19} />
        <PenApp size={20} />
        <Glyph width="20" height="14" viewBox="0 0 20 14" $stroke={1}>
          <path d="M6 3.5H18V12.5H4V8" />
          <path
            d="M7 5H17V11H5V8H7ZM18 6H20V10H18ZM0 2H5V6L3.5 7H1.5L0 6ZM1 0H2V2H1ZM3 0H4V2H3ZM2 7H3V11H2Z"
            fill="#000"
            stroke="none"
          />
        </Glyph>
        <Glyph width="17" height="16" viewBox="0 0 17 16" $stroke={1.1}>
          <path d="M1 16Q2 3 16 1M5 16Q6 7 16 5M9 16Q10 10 16 9" />
          <circle cx="14.5" cy="14" r="1.8" fill="#000" stroke="none" />
        </Glyph>
        <Glyph width="18" height="20" viewBox="0 0 18 20" $stroke={0.8}>
          <path d="M7.5 0.5H10.5V4.5H17.5V13.5H10.5V19.5H7.5V13.5H0.5V4.5H7.5ZM3 7H7.5V11H3ZM10.5 7H15V11H10.5Z" />
        </Glyph>
        <SogouMark size={22} />
        <Clock>
          17:35
          <br />
          2022/1/6
        </Clock>
        <Glyph width="20" height="20" viewBox="0 0 20 20" $stroke={1.4}>
          <path d="M0 0H20V15H14L11 19V15H0Z" fill="#000" stroke="none" />
          <path d="M4 4.5H16M4 8H16M4 11.5H10" stroke="#fff" />
          <circle cx="15.5" cy="14.5" r="4" fill="#222" stroke="#ddd" strokeWidth="1" />
        </Glyph>
      </Tray>
    </Taskbar>
  );
}

function SogouBar() {
  return (
    <ImeBar>
      <ImeLogo>
        <SogouMark size={38} />
      </ImeLogo>
      <Glyph width="18" height="18" viewBox="0 0 18 18" $stroke={2.5}>
        <path d="M1.5 4.5H16.5V12H1.5ZM9 0V18" />
      </Glyph>
      <Glyph width="18" height="16" viewBox="0 0 18 16" $stroke={1.5}>
        <circle cx="5" cy="4" r="2.2" />
        <path d="M11 15.5Q14.5 13.5 14 9" strokeWidth="2" />
        <circle cx="13" cy="8.5" r="2.2" fill="currentColor" stroke="none" />
      </Glyph>
      <Glyph width="20" height="20" viewBox="0 0 20 20" $stroke={2}>
        <circle cx="10" cy="10" r="8.8" />
        <path d="M7.5 5V9M12.5 5V9M5 11Q10 18 15 11" />
      </Glyph>
      <Glyph width="16" height="20" viewBox="0 0 16 20" $stroke={1.8}>
        <rect x="4.5" y="0" width="7" height="13" rx="3.5" fill="currentColor" stroke="none" />
        <path d="M1 9Q1 15.5 8 15.5Q15 15.5 15 9M8 15V19M4 19H12" />
      </Glyph>
      <Glyph width="20" height="16" viewBox="0 0 20 16" $stroke={2}>
        <rect x="1" y="1" width="18" height="14" rx="1.5" />
        <path d="M3 5H17M3 8.5H17" strokeDasharray="2 1.3" />
        <path d="M5 12H15" />
      </Glyph>
      <Glyph width="21" height="19" viewBox="0 0 21 19" $stroke={1}>
        <circle cx="7.5" cy="5" r="4.5" fill="currentColor" stroke="none" />
        <path d="M0 18Q0 11 7.5 10Q13 10 15 18Z" fill="currentColor" stroke="none" />
        <path d="M5 10.5H21V18H5Z" fill="#fff" stroke="none" />
        <path d="M21 10.5H5.5V18H21M12 12H8V14.5H12V17H7M21 12H14.5V17H21M14.5 14.5H18" />
      </Glyph>
      <Glyph width="18" height="18" viewBox="0 0 18 18" $flat>
        <path d="M5 1Q9 4 13 1L18 4 16 9 14 8V17H4V8L2 9 0 4Z" fill="currentColor" />
      </Glyph>
      <Glyph width="18" height="18" viewBox="0 0 18 18" $stroke={1.5}>
        <path d="M0 0H8V8H0ZM0 10H8V18H0ZM10 10H18V18H10Z" fill="currentColor" stroke="none" />
        <rect x="11" y="1" width="6" height="6" rx="1" />
      </Glyph>
    </ImeBar>
  );
}

export default function App() {
  return (
    <>
      <GlobalStyle />
      <Screen>
        <TitleBar>
          <VmwareLogo size={21} />
          <TitleText>Ubuntu 64 位 - VMware Workstation</TitleText>
          <CaptionButton aria-label="最小化">
            <Glyph width="12" height="12" viewBox="0 0 12 12" $stroke={1}>
              <path d="M0 5.5H12" />
            </Glyph>
          </CaptionButton>
          <CaptionButton aria-label="还原">
            <Glyph width="13" height="13" viewBox="0 0 13 13" $stroke={1}>
              <path d="M0.5 3.5H9.5V12.5H0.5ZM3.5 3.5V0.5H12.5V9.5H9.5" />
            </Glyph>
          </CaptionButton>
          <CaptionButton aria-label="关闭">
            <Cross size={13} stroke={1} />
          </CaptionButton>
        </TitleBar>
        <VmToolbar />
        <Workspace>
          <LibraryPanel />
          <Console>
            <Tabs>
              <Tab>
                <HomeMark />
                <span>主页</span>
                <button aria-label="关闭主页">
                  <Cross />
                </button>
              </Tab>
              <Tab $active>
                <GuestMark />
                <span>Ubuntu 64 位</span>
                <button aria-label="关闭 Ubuntu 64 位">
                  <Cross />
                </button>
              </Tab>
            </Tabs>
            <Viewport>
              <UbuntuDesktop />
              <ScrollBar>
                <ScrollArrow aria-label="向上滚动">
                  <Chevron dir="up" stroke={2} />
                </ScrollArrow>
                <ScrollThumb />
                <ScrollArrow aria-label="向下滚动">
                  <Chevron stroke={2} />
                </ScrollArrow>
              </ScrollBar>
            </Viewport>
          </Console>
        </Workspace>
        <VmStatusBar />
        <WindowsTaskbar />
        <VmContextMenu />
        <SogouBar />
        <Watermark>CSDN @立志冲海大</Watermark>
      </Screen>
    </>
  );
}
